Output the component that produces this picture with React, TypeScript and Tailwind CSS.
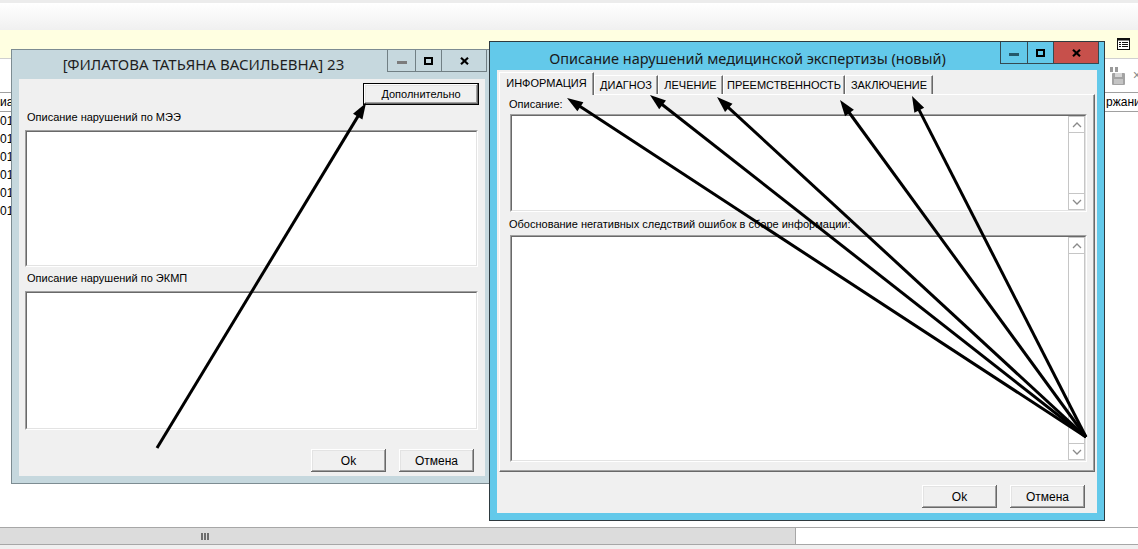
import React from "react";

const sans = "font-['Liberation_Sans',Arial,sans-serif]";
const ui = "font-['Noto_Sans','Open_Sans',sans-serif]";

// classic 3D raised edge for push buttons
const raised =
  "shadow-[inset_-1px_-1px_0_#696969,inset_1px_1px_0_#ffffff,inset_-2px_-2px_0_#a0a0a0,inset_2px_2px_0_#e3e3e3]";

const ARROWS: [number, number, number, number][] = [
  [157, 448, 366, 103],
  [1086, 437, 567, 98],
  [1086, 437, 650, 95],
  [1086, 437, 717, 97],
  [1086, 437, 840, 100],
  [1086, 437, 912, 96],
];

const TABS = [
  { label: "ИНФОРМАЦИЯ", w: "w-[95px]", active: true },
  { label: "ДИАГНОЗ", w: "w-[64px]", active: false },
  { label: "ЛЕЧЕНИЕ", w: "w-[65px]", active: false },
  { label: "ПРЕЕМСТВЕННОСТЬ", w: "w-[122px]", active: false },
  { label: "ЗАКЛЮЧЕНИЕ", w: "w-[88px]", active: false },
];

function ListIcon() {
  return (
    <svg width="13" height="12" viewBox="0 0 13 12">
      <rect x="0.5" y="0.5" width="12" height="11" fill="#fff" stroke="#111" />
      <rect x="0.5" y="0.5" width="12" height="2" fill="#111" />
      <rect x="2" y="4" width="2" height="1" fill="#111" />
      <rect x="5" y="4" width="6" height="1" fill="#111" />
      <rect x="2" y="6" width="2" height="1" fill="#111" />
      <rect x="5" y="6" width="6" height="1" fill="#111" />
      <rect x="2" y="8" width="2" height="1" fill="#111" />
      <rect x="5" y="8" width="6" height="1" fill="#111" />
    </svg>
  );
}

function SaveIcon() {
  return (
    <svg width="17" height="18" viewBox="0 0 17 18">
      <rect x="1" y="0" width="3" height="5" fill="#9a9a9a" />
      <rect x="6" y="0" width="3" height="5" fill="#9a9a9a" />
      <rect x="3" y="6" width="13" height="12" rx="1" fill="#a3a3a3" />
      <rect x="6" y="6" width="7" height="4" fill="#d6d6d6" />
      <rect x="5" y="12" width="9" height="5" fill="#c4c4c4" />
    </svg>
  );
}

function Chevron({ down }: { down?: boolean }) {
  return (
    <svg width="10" height="6" viewBox="0 0 10 6">
      <path
        d={down ? "M1 1 L5 5 L9 1" : "M1 5 L5 1 L9 5"}
        fill="none"
        stroke="#8a8a8a"
        strokeWidth="1.3"
      />
    </svg>
  );
}

function ScrollBar() {
  return (
    <div className="w-[17px] h-full flex flex-col border border-[#c6c6c6] bg-white">
      <div className="h-[16px] border-b border-[#c6c6c6] flex items-center justify-center">
        <Chevron />
      </div>
      <div className="flex-1" />
      <div className="h-[16px] border-t border-[#c6c6c6] flex items-center justify-center">
        <Chevron down />
      </div>
    </div>
  );
}

function TextBox({ h, scroll }: { h: string; scroll?: boolean }) {
  return (
    <div className={`${h} border border-[#a0a0a0] border-r-white border-b-white`}>
      <div className="h-full border border-[#696969] border-r-[#e3e3e3] border-b-[#e3e3e3] bg-white flex justify-end">
        {scroll && <ScrollBar />}
      </div>
    </div>
  );
}

function Btn({ label }: { label: string }) {
  return (
    <div className={`w-[75px] h-[23px] bg-[#f0f0f0] ${raised} flex items-center justify-center text-[12px] text-black`}>
      {label}
    </div>
  );
}

function Caption({ active }: { active: boolean }) {
  const line = active ? "border-[#344a52]" : "border-[#717f84]";
  return (
    <div className={`flex h-[22px] mr-[5px] border-x border-b ${line} ${active ? "w-[99px]" : "w-[100px]"}`}>
      <div className={`${active ? "w-[26px]" : "w-[27px]"} flex items-center justify-center`}>
        <div className={`w-[10px] h-[3px] mt-[4px] ${active ? "bg-[#24586b]" : "bg-[#7c7c7c]"}`} />
      </div>
      <div className={`w-[26px] border-l ${line} flex items-center justify-center`}>
        <div className="w-[9px] h-[8px] border-2 border-black" />
      </div>
      <div className={`flex-1 border-l ${line} flex items-center justify-center ${active ? "bg-[#c7504b]" : ""}`}>
        <svg width="9" height="8" viewBox="0 0 9 8">
          <path d="M1 0.8 L8 7.2 M8 0.8 L1 7.2" stroke="#000" strokeWidth="2.2" />
        </svg>
      </div>
    </div>
  );
}

function Background() {
  const rows = ["01", "01", "01", "01", "01", "01"];
  return (
    <div className="flex flex-col h-full text-[12px] text-black">
      <div className="h-[3px] bg-[#ececec]" />
      <div className="h-[27px] bg-gradient-to-b from-white to-[#f0f0f0]" />
      <div className="h-[28px] bg-[#ffffe1] flex items-center justify-end pr-[8px]">
        <ListIcon />
      </div>
      <div className="h-[35px] border-t border-[#d0d0d0] border-b border-b-[#a0a0a0] flex items-center justify-end gap-[7px]">
        <SaveIcon />
        <span className="text-[14px] text-[#8c8c8c] -mr-[3px]">×</span>
      </div>
      <div className="h-[19px] border-b border-[#a0a0a0] flex items-center justify-between">
        <span className="leading-none">иа</span>
        <span className="w-[33px] pl-[1px] overflow-hidden whitespace-nowrap leading-none">ржание</span>
      </div>
      {rows.map((r, i) => (
        <div key={i} className="h-[18px] flex items-center">
          <span>{r}</span>
        </div>
      ))}
      <div className="flex-1" />
      <div className="h-[18px] border-y border-[#a7a7a7] flex">
        <div className="w-[796px] bg-[#dcdcdc] border-r border-[#a7a7a7] flex items-center pl-[201px] gap-[1px]">
          <div className="w-[2px] h-[7px] bg-[#6d6d6d]" />
          <div className="w-[2px] h-[7px] bg-[#6d6d6d]" />
          <div className="w-[2px] h-[7px] bg-[#6d6d6d]" />
        </div>
        <div className="flex-1 bg-white" />
      </div>
      <div className="h-[4px] bg-[#f0f0f0]" />
    </div>
  );
}

function LeftWindow() {
  return (
    <div className="absolute left-[11px] top-[49px] w-[482px] h-[435px] border border-[#7d8c92] bg-[#c6d8de] flex flex-col">
      <div className="h-[29px] flex items-start">
        <div className={`flex-1 h-full flex items-center justify-center pl-[8px] ${ui} text-[15px] text-[#1e1e1e]`}>
          [ФИЛАТОВА ТАТЬЯНА ВАСИЛЬЕВНА] 23
        </div>
        <Caption active={false} />
      </div>

      <div className="flex-1 mx-[7px] mb-[7px] bg-[#f0f0f0] flex flex-col text-[11px] text-black">
        <div className="flex justify-end mt-[4px] mr-[6px]">
          <div className={`w-[116px] h-[22px] border border-black bg-[#f0f0f0] ${raised} flex items-center justify-center`}>
            Дополнительно
          </div>
        </div>
        <div className="mt-[6px] pl-[8px] leading-[13px]">Описание нарушений по МЭЭ</div>
        <div className="mt-[6px] ml-[6px] mr-[7px]">
          <TextBox h="h-[137px]" />
        </div>
        <div className="mt-[5px] pl-[8px] leading-[13px]">Описание нарушений по ЭКМП</div>
        <div className="mt-[6px] ml-[6px] mr-[7px]">
          <TextBox h="h-[139px]" />
        </div>
        <div className="mt-[19px] mr-[11px] flex justify-end gap-[13px]">
          <Btn label="Ok" />
          <Btn label="Отмена" />
        </div>
      </div>
    </div>
  );
}

function RightWindow() {
  return (
    <div className="absolute left-[489px] top-[41px] w-[616px] h-[480px] border border-[#2e3a3f] bg-[#63c9ea] flex flex-col">
      <div className="h-[28px] flex items-start">
        <div className={`flex-1 h-full flex items-center justify-center pt-[5px] pl-[5px] ${ui} text-[14.5px] text-[#1a1a1a]`}>
          Описание нарушений медицинской экспертизы (новый)
        </div>
        <Caption active />
      </div>

      <div className="flex-1 mx-[7px] mb-[7px] bg-[#f0f0f0] flex flex-col text-[11px] text-black">
        <div className="mt-[2px] mx-[2px] flex flex-col">
          {/* tab strip */}
          <div className="h-[22px] flex items-end">
            {TABS.map((t) =>
              t.active ? (
                <div
                  key={t.label}
                  className={`${t.w} h-[23px] -mb-px relative z-10 bg-[#f0f0f0] border-t border-l border-white border-r border-r-[#696969] shadow-[inset_-1px_0_0_#a0a0a0] flex items-start justify-center pt-[4px] leading-[13px]`}
                >
                  {t.label}
                </div>
              ) : (
                <div
                  key={t.label}
                  className={`${t.w} h-[19px] bg-[#f0f0f0] border-t border-l border-white border-r border-r-[#696969] shadow-[inset_-1px_0_0_#a0a0a0] flex items-center justify-center leading-[13px]`}
                >
                  {t.label}
                </div>
              )
            )}
          </div>

          {/* tab page */}
          <div className="h-[378px] border border-white border-r-[#696969] border-b-[#696969] shadow-[inset_-1px_-1px_0_#a0a0a0] flex flex-col">
            <div className="mt-[3px] pl-[9px] leading-[13px]">Описание:</div>
            <div className="mt-[3px] ml-[10px] mr-[7px]">
              <TextBox h="h-[98px]" scroll />
            </div>
            <div className="mt-[6px] pl-[9px] leading-[13px]">
              Обоснование негативных следствий ошибок в сборе информации:
            </div>
            <div className="mt-[4px] ml-[10px] mr-[7px]">
              <TextBox h="h-[227px]" scroll />
            </div>
          </div>
        </div>

        <div className="mt-[13px] mr-[12px] flex justify-end gap-[13px]">
          <Btn label="Ok" />
          <Btn label="Отмена" />
        </div>
      </div>
    </div>
  );
}

function Arrows() {
  return (
    <svg className="absolute inset-0 pointer-events-none" width="1138" height="549">
      {ARROWS.map(([x1, y1, x2, y2], i) => {
        const dx = x2 - x1;
        const dy = y2 - y1;
        const len = Math.hypot(dx, dy);
        const ux = dx / len;
        const uy = dy / len;
        const hl = 16;
        const hw = 5.5;
        const bx = x2 - ux * hl;
        const by = y2 - uy * hl;
        const px = -uy;
        const py = ux;
        const pts = `${x2},${y2} ${bx + px * hw},${by + py * hw} ${bx - px * hw},${by - py * hw}`;
        return (
          <g key={i}>
            <line x1={x1} y1={y1} x2={bx + ux * 3} y2={by + uy * 3} stroke="#000" strokeWidth="3" />
            <polygon points={pts} fill="#000" />
          </g>
        );
      })}
    </svg>
  );
}

export default function App() {
  return (
    <div className={`relative w-[1138px] h-[549px] overflow-hidden bg-white ${sans}`}>
      <Background />
      <LeftWindow />
      <RightWindow />
      <Arrows />
    </div>
  );
}
